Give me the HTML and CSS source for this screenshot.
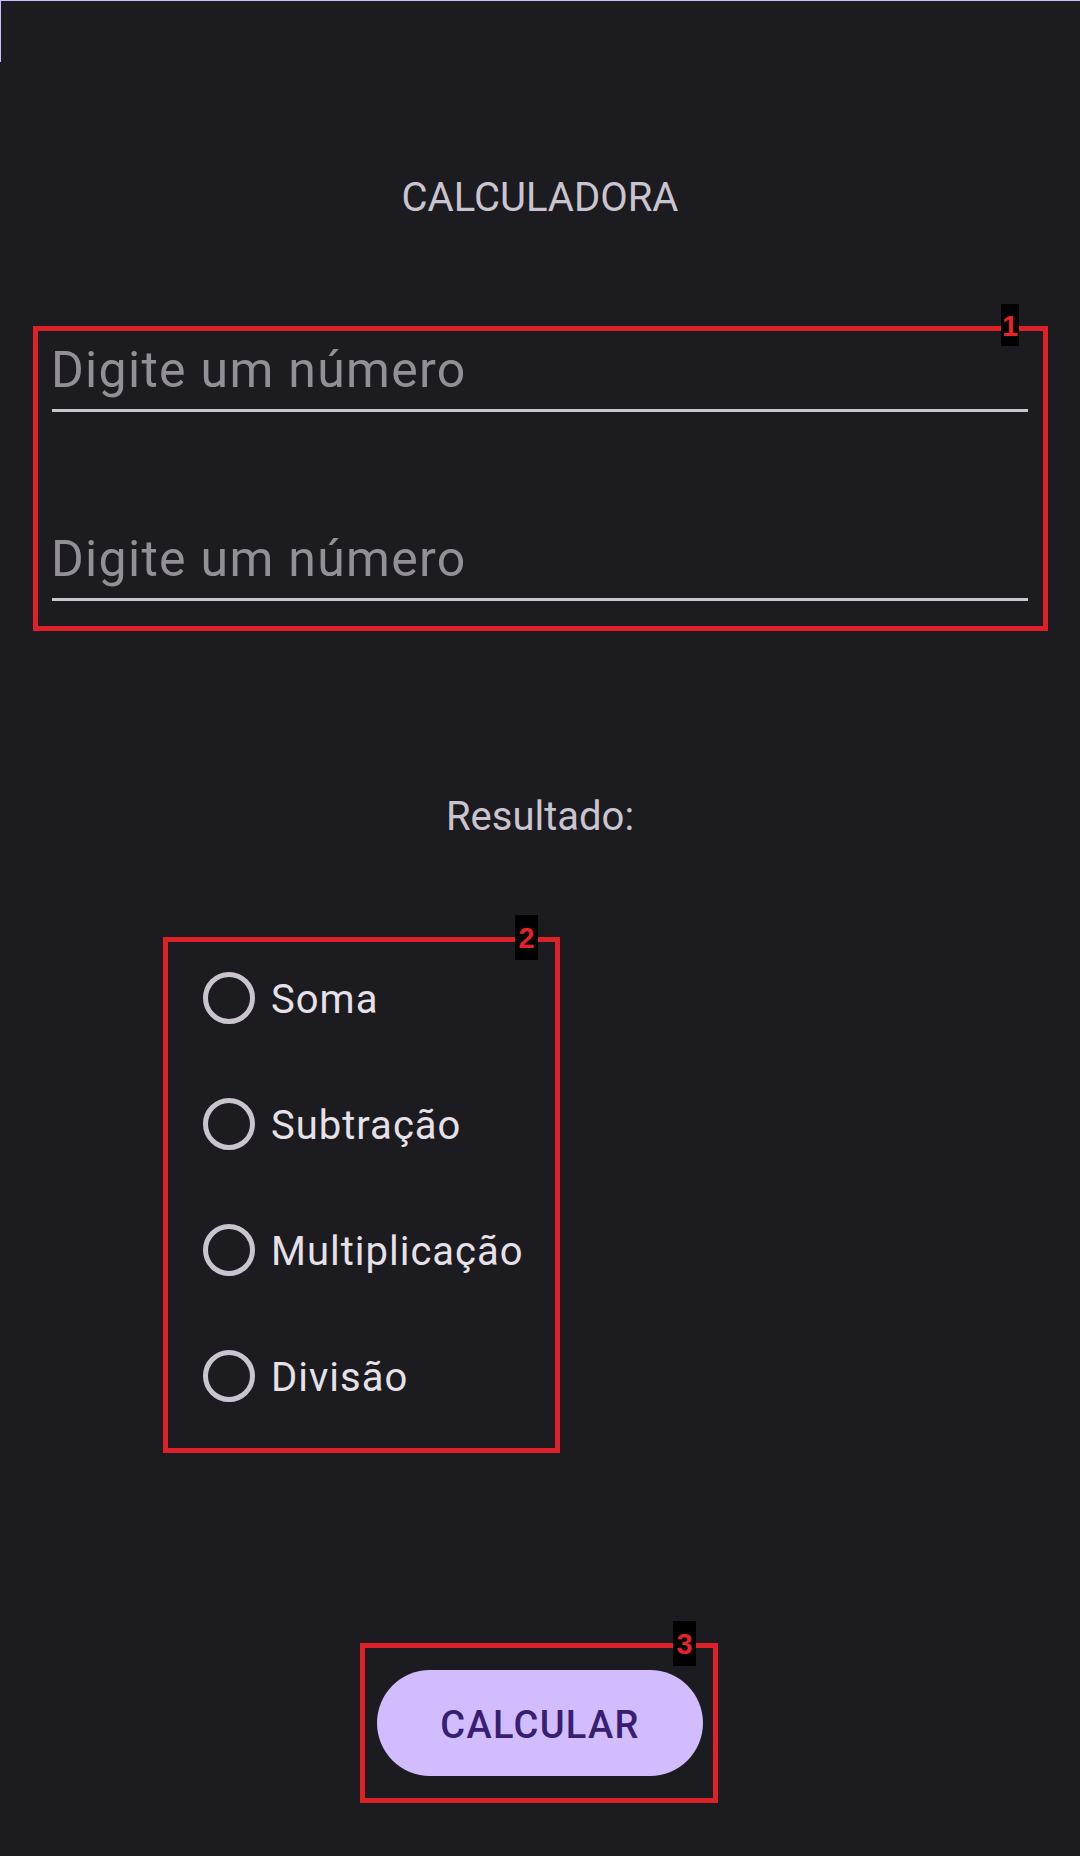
FILE: index.html
```html
<!DOCTYPE html>
<html lang="pt">
<head>
<meta charset="utf-8">
<title>Calculadora</title>
<link rel="stylesheet" href="styles.css">
</head>
<body>
<div class="screen">
  <h1 class="title">CALCULADORA</h1>

  <div class="fields annotated">
    <div class="field"><span class="hint">Digite um número</span></div>
    <div class="field field-second"><span class="hint">Digite um número</span></div>
    <div class="mark mark-fields"><span class="tag tag-narrow">1</span></div>
  </div>

  <p class="result">Resultado:</p>

  <div class="radios annotated">
    <div class="radio"><span class="ring"></span><span class="radio-label">Soma</span></div>
    <div class="radio"><span class="ring"></span><span class="radio-label">Subtração</span></div>
    <div class="radio"><span class="ring"></span><span class="radio-label">Multiplicação</span></div>
    <div class="radio"><span class="ring"></span><span class="radio-label">Divisão</span></div>
    <div class="mark mark-radios"><span class="tag">2</span></div>
  </div>

  <div class="actions">
    <div class="btn-wrap annotated">
      <button class="btn">CALCULAR</button>
      <div class="mark mark-btn"><span class="tag">3</span></div>
    </div>
  </div>
</div>
</body>
</html>
```

FILE: styles.css
```css
html, body {
  margin: 0;
  padding: 0;
  background: #1c1b1f;
}

body {
  width: 1080px;
  height: 1856px;
  overflow: hidden;
  font-family: Roboto, "Noto Sans", sans-serif;
}

.screen {
  position: relative;
  width: 1080px;
  height: 1856px;
  display: flex;
  flex-direction: column;
}

/* focus edge in the top-left corner */
.screen::before {
  content: "";
  position: absolute;
  left: 0;
  top: 0;
  width: 1080px;
  height: 1px;
  background: #d0bcff;
}
.screen::after {
  content: "";
  position: absolute;
  left: 0;
  top: 0;
  width: 1px;
  height: 62px;
  background: #d0bcff;
}

.title {
  margin: 174px 0 0;
  font-size: 40px;
  line-height: 48px;
  font-weight: 400;
  color: #cac4d0;
  text-align: center;
}

.annotated {
  position: relative;
}

.fields {
  margin: 118px 52px 0;
}

.field {
  height: 60px;
  padding-bottom: 9px;
  border-bottom: 3px solid #cac4d0;
}

.field-second {
  margin-top: 117px;
}

.hint {
  display: block;
  font-size: 50px;
  line-height: 60px;
  letter-spacing: 1.3px;
  color: #938f99;
  margin-left: -1px;
}

.result {
  margin: 192px 0 0;
  font-size: 40px;
  line-height: 48px;
  color: #cac4d0;
  text-align: center;
}

.radios {
  margin: 94px 0 0 165px;
  width: 395px;
}

.radio {
  height: 126px;
  display: flex;
  align-items: center;
  padding-left: 38px;
}

.ring {
  width: 42px;
  height: 42px;
  border: 5px solid #cac4d0;
  border-radius: 50%;
  flex: none;
}

.radio-label {
  margin-left: 16px;
  padding-top: 4px;
  font-size: 40px;
  line-height: 48px;
  letter-spacing: 1px;
  color: #e6e0e9;
}

.actions {
  display: flex;
  justify-content: center;
  margin-top: 231px;
}

.btn {
  width: 326px;
  height: 106px;
  border: none;
  border-radius: 53px;
  background: #d0bcff;
  color: #381e72;
  font-family: Roboto, "Noto Sans", sans-serif;
  font-size: 38px;
  font-weight: 500;
  letter-spacing: 1.3px;
  padding: 4px 0 0;
  display: block;
}

/* annotation overlays */
.mark {
  position: absolute;
  border: 5px solid #dd2128;
  pointer-events: none;
}

.mark-fields {
  left: -19px;
  top: -14px;
  right: -20px;
  bottom: -30px;
}

.mark-radios {
  left: -2px;
  top: 2px;
  right: 0;
  bottom: -14px;
}

.mark-btn {
  left: -17px;
  top: -27px;
  right: -15px;
  bottom: -27px;
}

.tag {
  position: absolute;
  top: -27px;
  right: 17px;
  width: 23px;
  height: 45px;
  background: #000;
  color: #e5232b;
  font-family: "Liberation Sans", Arial, sans-serif;
  font-weight: 700;
  font-size: 29px;
  line-height: 47px;
  text-align: center;
}

.tag-narrow {
  width: 18px;
  height: 42px;
  right: 24px;
  line-height: 44px;
}
```
